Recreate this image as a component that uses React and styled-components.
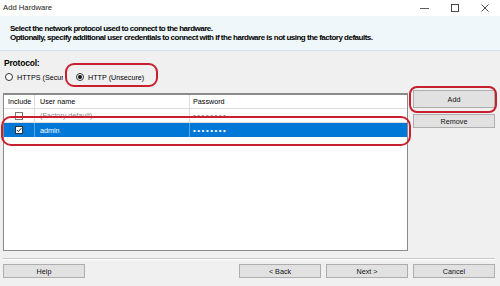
import React from "react";
import styled, { createGlobalStyle, css } from "styled-components";

const Global = createGlobalStyle`
  html, body { margin: 0; padding: 0; overflow: hidden; }
  body { font-family: "Liberation Sans", Arial, sans-serif; color: #000; }
`;

const Window = styled.div`
  width: 500px;
  height: 286px;
  display: flex;
  flex-direction: column;
  background: #f0f0f0;
`;

const TitleBar = styled.div`
  height: 16px;
  background: #fff;
  display: flex;
  align-items: center;
  justify-content: space-between;
  padding-left: 3px;
`;

const Title = styled.span`
  font-size: 7.7px;
  color: #222;
  line-height: 14px;
`;

const Controls = styled.div`
  display: flex;
  align-items: center;
  height: 16px;
`;

const Ctl = styled.div`
  width: 30px;
  height: 16px;
  display: flex;
  align-items: center;
  justify-content: center;
`;

const Header = styled.div`
  height: 35px;
  box-sizing: border-box;
  background: #eff7fa;
  border-bottom: 1px solid #d6e3e9;
  padding: 9px 0 0 10px;
`;

const HeaderLine = styled.div`
  font-size: 8px;
  font-weight: bold;
  letter-spacing: -0.5px;
  line-height: 8.5px;
  white-space: nowrap;
`;

const Body = styled.div`
  flex: 1;
  display: flex;
  flex-direction: column;
  padding: 0 5px 0 3px;
`;

const Label = styled.div`
  font-size: 8.5px;
  font-weight: bold;
  line-height: 10px;
  margin: 7px 0 0 1px;
  letter-spacing: -0.2px;
`;

const RadioRow = styled.div`
  display: flex;
  align-items: center;
  height: 12px;
  margin-top: 3px;
  padding-left: 2px;
`;

const RadioItem = styled.label`
  position: relative;
  display: flex;
  align-items: center;
  gap: 4px;
  font-size: 7.2px;
  white-space: nowrap;
  ${(p) => p.$width && css`width: ${p.$width}px; overflow: hidden;`}
  ${(p) => p.$ml && css`margin-left: ${p.$ml}px;`}
`;

const Circle = styled.span`
  width: 8px;
  height: 8px;
  box-sizing: border-box;
  border: 1px solid #333;
  border-radius: 50%;
  background: #fff;
  display: flex;
  align-items: center;
  justify-content: center;
  flex: none;
  &::after {
    content: "";
    width: 4px;
    height: 4px;
    border-radius: 50%;
    background: ${(p) => (p.$on ? "#111" : "transparent")};
  }
`;

const Mark = styled.div`
  position: absolute;
  top: ${(p) => p.$t}px;
  bottom: ${(p) => p.$b}px;
  left: ${(p) => p.$l}px;
  right: ${(p) => p.$r}px;
  border: 2px solid #c8202f;
  border-radius: ${(p) => p.$rad || 9}px;
  pointer-events: none;
  z-index: 2;
`;

const Main = styled.div`
  display: flex;
  margin-top: 7px;
`;

const Table = styled.div`
  width: 407px;
  height: 158px;
  box-sizing: border-box;
  margin-top: 3px;
  background: #fff;
  border: 1px solid #8a8a8a;
  border-top: 2px solid #8a8a8a;
`;

const Row = styled.div`
  position: relative;
  display: grid;
  grid-template-columns: 31px 155px 1fr;
  height: 14px;
  font-size: 7.2px;
  ${(p) =>
    p.$selected
      ? css`background: #0078d7; color: #fff;`
      : css`border-bottom: 1px solid #dcdcdc; box-sizing: border-box;`}
  ${(p) => p.$muted && css`color: #8c8c8c;`}
`;

const Cell = styled.div`
  display: flex;
  align-items: center;
  padding-left: ${(p) => p.$pl ?? 4}px;
  border-right: 1px solid ${(p) => (p.$light ? "#5aa4e0" : "#dcdcdc")};
  ${(p) => p.$center && css`justify-content: center;`}
  ${(p) => p.$last && css`border-right: none;`}
  white-space: nowrap;
  overflow: hidden;
`;

const Box = styled.span`
  width: 8px;
  height: 8px;
  box-sizing: border-box;
  border: 1px solid ${(p) => (p.$checked ? "#333" : "#777")};
  background: #fff;
  display: flex;
  align-items: center;
  justify-content: center;
`;

const Dots = styled.span`
  font-size: 8px;
  letter-spacing: 1.5px;
`;

const Side = styled.div`
  display: flex;
  flex-direction: column;
  margin-left: 5px;
  width: 82px;
`;

const Button = styled.button`
  position: relative;
  height: ${(p) => p.$h || 14}px;
  width: ${(p) => p.$w || 82}px;
  margin-top: ${(p) => p.$mt || 0}px;
  margin-left: ${(p) => p.$ml || 0}px;
  padding: 0;
  background: #e1e1e1;
  border: 1px solid #adadad;
  font-family: "Liberation Sans", Arial, sans-serif;
  font-size: 7.2px;
  color: #111;
`;

const Separator = styled.div`
  margin-top: 7px;
  height: 1px;
  background: #c8c8c8;
  border-bottom: 1px solid #fff;
`;

const Footer = styled.div`
  display: flex;
  margin-top: 4px;
`;

const Spacer = styled.div`
  flex: 1;
`;

export default function App() {
  return (
    <>
      <Global />
      <Window>
        <TitleBar>
          <Title>Add Hardware</Title>
          <Controls>
            <Ctl>
              <svg width="10" height="10" viewBox="0 0 10 10">
                <line x1="0" y1="5.5" x2="9" y2="5.5" stroke="#333" strokeWidth="0.8" />
              </svg>
            </Ctl>
            <Ctl>
              <svg width="10" height="10" viewBox="0 0 10 10">
                <rect x="1.5" y="1.5" width="7" height="7" fill="none" stroke="#333" strokeWidth="0.9" />
              </svg>
            </Ctl>
            <Ctl>
              <svg width="10" height="10" viewBox="0 0 10 10">
                <path d="M1.5 1.5 L8.5 8.5 M8.5 1.5 L1.5 8.5" stroke="#333" strokeWidth="0.9" />
              </svg>
            </Ctl>
          </Controls>
        </TitleBar>
        <Header>
          <HeaderLine>Select the network protocol used to connect to the hardware.</HeaderLine>
          <HeaderLine>
            Optionally, specify additional user credentials to connect with if the hardware is not using the factory defaults.
          </HeaderLine>
        </Header>
        <Body>
          <Label>Protocol:</Label>
          <RadioRow>
            <RadioItem $width={58}>
              <Circle />
              HTTPS (Secure)
            </RadioItem>
            <RadioItem $ml={13}>
              <Circle $on />
              HTTP (Unsecure)
              <Mark $t={-10} $b={-5} $l={-11} $r={-14} $rad={9} />
            </RadioItem>
          </RadioRow>
          <Main>
            <Table>
              <Row>
                <Cell>Include</Cell>
                <Cell $pl={5}>User name</Cell>
                <Cell $pl={3} $last>Password</Cell>
              </Row>
              <Row $muted>
                <Cell $center $pl={0}>
                  <Box />
                </Cell>
                <Cell $pl={5}>(Factory default)</Cell>
                <Cell $pl={3} $last>
                  <Dots>••••••••</Dots>
                </Cell>
              </Row>
              <Row $selected>
                <Cell $center $pl={0} $light>
                  <Box $checked>
                    <svg width="6" height="6" viewBox="0 0 6 6">
                      <path d="M0.8 3 L2.4 4.6 L5.3 1.2" fill="none" stroke="#222" strokeWidth="1" />
                    </svg>
                  </Box>
                </Cell>
                <Cell $pl={5} $light>admin</Cell>
                <Cell $pl={3} $last>
                  <Dots>••••••••</Dots>
                </Cell>
                <Mark $t={-7} $b={-9} $l={-3} $r={-4} $rad={10} />
              </Row>
            </Table>
            <Side>
              <Button $h={18}>
                Add
                <Mark $t={-5} $b={-6} $l={-5} $r={-3} $rad={8} />
              </Button>
              <Button $mt={6}>Remove</Button>
            </Side>
          </Main>
          <Separator />
          <Footer>
            <Button>Help</Button>
            <Spacer />
            <Button>&lt; Back</Button>
            <Button $ml={5}>Next &gt;</Button>
            <Button $ml={5}>Cancel</Button>
          </Footer>
        </Body>
      </Window>
    </>
  );
}
